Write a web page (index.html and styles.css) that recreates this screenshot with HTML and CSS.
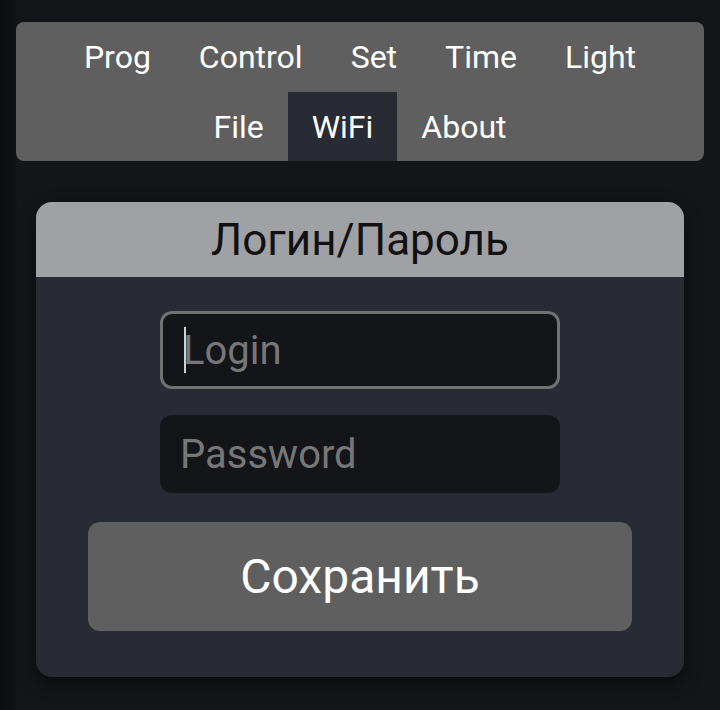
FILE: index.html
```
<!DOCTYPE html>
<html lang="ru">
<head>
<meta charset="utf-8">
<title>WiFi</title>
<link rel="stylesheet" href="styles.css">
</head>
<body>
<nav class="menu">
  <a class="menu-item" href="#">Prog</a>
  <a class="menu-item" href="#">Control</a>
  <a class="menu-item" href="#">Set</a>
  <a class="menu-item" href="#">Time</a>
  <a class="menu-item" href="#">Light</a>
  <a class="menu-item" href="#">File</a>
  <a class="menu-item active" href="#">WiFi</a>
  <a class="menu-item" href="#">About</a>
</nav>
<section class="card">
  <h2 class="card-title">Логин/Пароль</h2>
  <form class="card-body">
    <label class="field focused">
      <input class="input" type="text" placeholder="Login">
      <span class="caret"></span>
    </label>
    <label class="field">
      <input class="input" type="password" placeholder="Password">
    </label>
    <button class="save" type="button">Сохранить</button>
  </form>
</section>
</body>
</html>
```
FILE: styles.css
```
* { box-sizing: border-box; }
html, body { height: 100%; }
body {
  margin: 0;
  padding: 22px 16px;
  background: linear-gradient(to right, #0b0c0f 0, #0e1013 10px, #131519 18px, #131519 100%);
  font-family: Roboto, "Noto Sans", "Liberation Sans", sans-serif;
  color: #fff;
}
.menu {
  display: flex;
  flex-wrap: wrap;
  justify-content: center;
  background: #5f5f5f;
  border-radius: 8px;
  overflow: hidden;
}
.menu-item {
  display: block;
  padding: 1px 24px 0;
  height: 69.5px;
  line-height: 69.5px;
  font-size: 32px;
  color: #fff;
  text-decoration: none;
}
.menu-item.active { background: #292b34; }
.card {
  margin: 41px 20px 0;
  background: #292b34;
  border-radius: 16px;
  overflow: hidden;
  box-shadow: 0 6px 18px rgba(0,0,0,0.45);
}
.card-title {
  margin: 0;
  height: 75px;
  line-height: 77px;
  background: #a0a1a5;
  color: #111;
  font-weight: 400;
  font-size: 44px;
  text-align: center;
}
.card-body {
  display: flex;
  flex-direction: column;
  align-items: center;
  padding: 34px 52px 46px;
}
.field {
  position: relative;
  display: block;
  width: 400px;
  margin-bottom: 26px;
}
.input {
  display: block;
  width: 100%;
  height: 78px;
  padding: 0 17px;
  border: 3px solid transparent;
  border-radius: 12px;
  background: #131519;
  color: #ddd;
  font-family: inherit;
  font-size: 40px;
  outline: none;
}
.field.focused .input { border-color: #717171; padding-left: 20px; }
.input::placeholder { color: #777; }
.caret {
  position: absolute;
  left: 24px;
  top: 16px;
  width: 2px;
  height: 46px;
  background: #d0d0d0;
}
.save {
  display: block;
  width: 100%;
  height: 109px;
  margin-top: 3px;
  border: 0;
  border-radius: 12px;
  background: #5f5f5f;
  color: #fff;
  font-family: inherit;
  font-size: 48px;
}
```
